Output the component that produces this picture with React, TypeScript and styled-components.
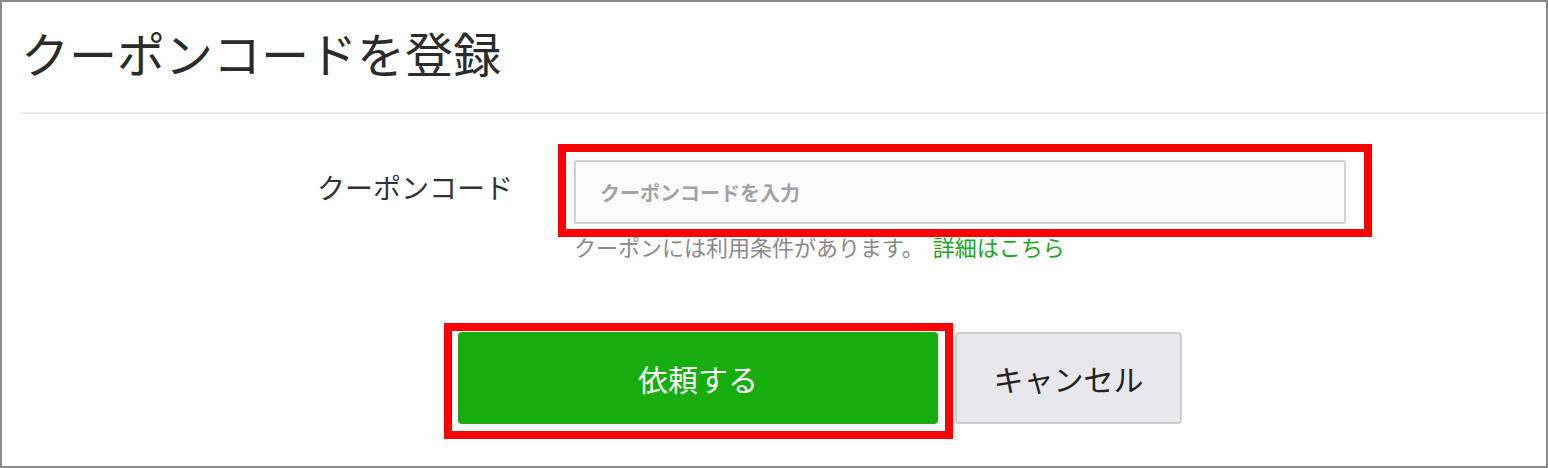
import { createGlobalStyle, styled } from 'styled-components';

const GlobalStyle = createGlobalStyle`
  html, body {
    margin: 0;
    padding: 0;
    background: #ffffff;
  }
  body {
    font-family: 'Noto Sans CJK JP', 'Noto Sans', sans-serif;
  }
`;

interface HighlightProps {
  $top: number;
  $left: number;
  $right: number;
  $bottom: number;
}

const App = () => {
  return (
    <>
      <GlobalStyle />
      <StFrame>
        <StHeader>
          <StTitle>クーポンコードを登録</StTitle>
        </StHeader>
        <StForm>
          <StLabel>クーポンコード</StLabel>
          <StField>
            <StInputWrap>
              <StInput type="text" placeholder="クーポンコードを入力" />
              <StHighlight $top={-16} $left={-16} $right={-26} $bottom={-13} />
            </StInputWrap>
            <StNote>
              クーポンには利用条件があります。
              <StLink href="#">詳細はこちら</StLink>
            </StNote>
          </StField>
        </StForm>
        <StBtnRow>
          <StBtnWrap>
            <StSubmitBtn type="button">依頼する</StSubmitBtn>
            <StHighlight $top={-9} $left={-14} $right={-15} $bottom={-15} />
          </StBtnWrap>
          <StCancelBtn type="button">キャンセル</StCancelBtn>
        </StBtnRow>
      </StFrame>
    </>
  );
};

export default App;

const StFrame = styled.div`
  display: flex;
  flex-direction: column;

  width: 1548px;
  height: 468px;

  box-sizing: border-box;
  border: 2px solid #8a8a8a;
  background-color: #ffffff;
  overflow: hidden;
`;

const StHeader = styled.div`
  margin-left: 18px;
  padding: 26px 0 36px 1px;

  border-bottom: 2px solid #ededed;
`;

const StTitle = styled.h1`
  margin: 0;

  font-size: 48px;
  font-weight: 400;
  line-height: 48px;
  color: #2b2b2b;
`;

const StForm = styled.div`
  display: grid;
  grid-template-columns: 511px 772px;
  column-gap: 61px;

  padding-top: 46px;
`;

const StLabel = styled.div`
  margin-top: 13px;

  text-align: right;
  font-size: 28px;
  line-height: 28px;
  color: #333333;
`;

const StField = styled.div`
  display: flex;
  flex-direction: column;
`;

const StInputWrap = styled.div`
  position: relative;
`;

const StInput = styled.input`
  display: block;

  width: 100%;
  height: 64px;
  padding: 0 24px;

  box-sizing: border-box;
  border: 2px solid #d0d1d4;
  border-radius: 3px;
  background-color: #fbfcfd;
  outline: none;

  font-family: 'Noto Sans CJK JP', sans-serif;
  font-size: 20px;
  font-weight: 700;
  color: #333333;

  &::placeholder {
    color: #a3a3a3;
  }
`;

const StHighlight = styled.div<HighlightProps>`
  position: absolute;
  top: ${({ $top }) => $top}px;
  left: ${({ $left }) => $left}px;
  right: ${({ $right }) => $right}px;
  bottom: ${({ $bottom }) => $bottom}px;
  z-index: 2;

  border: 8px solid #ff0000;
  pointer-events: none;
`;

const StNote = styled.p`
  margin: 11px 0 0;

  font-size: 22px;
  line-height: 22px;
  color: #8a8a8a;
`;

const StLink = styled.a`
  margin-left: 9px;

  color: #1aa71a;
  text-decoration: none;
`;

const StBtnRow = styled.div`
  display: flex;
  gap: 17px;

  padding: 75px 0 0 456px;
`;

const StBtnWrap = styled.div`
  position: relative;
`;

const StSubmitBtn = styled.button`
  display: flex;
  justify-content: center;
  align-items: center;

  width: 480px;
  height: 92px;

  border: none;
  border-radius: 4px;
  background-color: #17ad0e;

  font-family: 'Noto Sans CJK JP', sans-serif;
  font-size: 30px;
  color: #ffffff;
  cursor: pointer;
`;

const StCancelBtn = styled.button`
  display: flex;
  justify-content: center;
  align-items: center;

  width: 227px;
  height: 92px;

  box-sizing: border-box;
  border: 2px solid #cdcdd2;
  border-radius: 4px;
  background-color: #e7e7ec;

  font-family: 'Noto Sans CJK JP', sans-serif;
  font-size: 30px;
  color: #222222;
  cursor: pointer;
`;
